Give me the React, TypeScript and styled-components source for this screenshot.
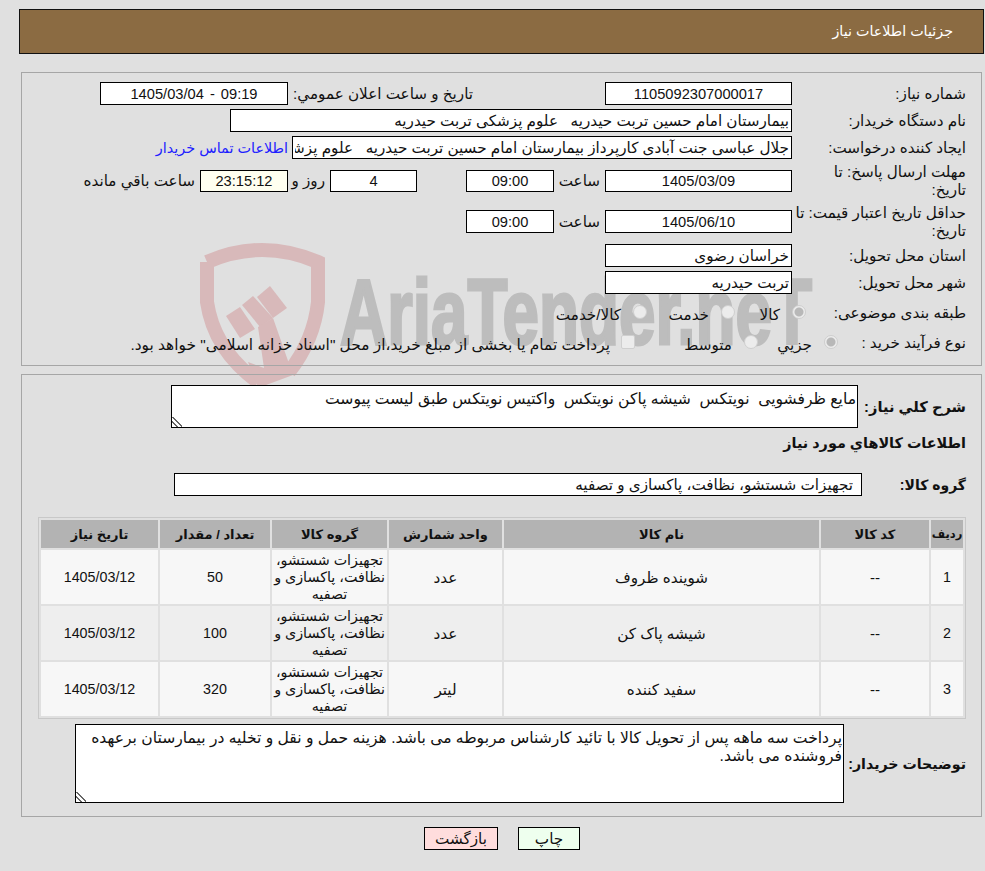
import styled, {createGlobalStyle} from 'styled-components';

const items = [
  {row: 1, name: 'شوینده ظروف', unit: 'عدد', qty: 50},
  {row: 2, name: 'شیشه پاک کن', unit: 'عدد', qty: 100},
  {row: 3, name: 'سفید کننده', unit: 'لیتر', qty: 320},
];

const GROUP = 'تجهیزات شستشو، نظافت، پاکسازی و تصفیه';
const FONT = `'Liberation Sans', 'DejaVu Sans', sans-serif`;

const GlobalStyle = createGlobalStyle`
  html, body {
    margin: 0;
    background: #e0e0e0;
    overflow: hidden;
  }
`;

export default function App() {
  return (
    <>
      <GlobalStyle />
      <Page>
        <Watermark viewBox="0 0 640 160" aria-hidden="true">
          <g fill="none" stroke="#d8b9ba" strokeWidth="14">
            <path d="M207 22 Q262 -2 318 22 L318 62 Q314 100 289 132" />
            <path d="M207 22 L207 62 Q214 110 258 142" />
          </g>
          <g fill="#d8b9ba">
            <path d="M226 76 L240 67 L255 89 L240 98 Z" />
            <path d="M242 65 L253 56 L273 78 L260 87 Z" />
            <path d="M257 57 L270 46 L287 68 L273 78 Z" />
            <path d="M258 87 L273 78 L293 135 L258 148 L248 122 L264 128 Z" />
          </g>
          <WatermarkText x="340" y="104" textLength="472" lengthAdjust="spacingAndGlyphs">
            AriaTender.neT
          </WatermarkText>
        </Watermark>

        <Header>جزئیات اطلاعات نیاز</Header>

        <InfoPanel>
          <Row>
            <Label>شماره نیاز:</Label>
            <Field $width={187} readOnly value="1105092307000017" />
            <InlineLabel $width={317} $inset={132}>تاریخ و ساعت اعلان عمومي:</InlineLabel>
            <Field $width={188} readOnly value="09:19 - 1405/03/04" />
          </Row>
          <Row>
            <Label>نام دستگاه خریدار:</Label>
            <TextField $width={562} readOnly value="بیمارستان امام حسین تربت حیدریه   علوم پزشکی تربت حیدریه" />
          </Row>
          <Row>
            <Label>ایجاد کننده درخواست:</Label>
            <TextField
              $width={500}
              readOnly
              value="جلال عباسی جنت آبادی کارپرداز بیمارستان امام حسین تربت حیدریه   علوم پزشکی تربت حیدریه"
            />
            <ContactLink href="#">اطلاعات تماس خریدار</ContactLink>
          </Row>
          <TallRow $height={40} $lift={-2}>
            <Label>مهلت ارسال پاسخ: تا<br />تاریخ:</Label>
            <Field $width={187} $height={22} readOnly value="1405/03/09" />
            <InlineLabel $width={51} $inset={5}>ساعت</InlineLabel>
            <Field $width={88} $height={22} readOnly value="09:00" />
            <Field $width={87} $height={22} $gap={49} readOnly value="4" />
            <InlineLabel $width={42} $inset={5}>روز و</InlineLabel>
            <Field $width={88} $height={22} $tint="#fffff0" readOnly value="23:15:12" />
            <InlineLabel $inset={5}>ساعت باقي مانده</InlineLabel>
          </TallRow>
          <TallRow $height={41} $lift={0}>
            <Label>حداقل تاریخ اعتبار قیمت: تا<br />تاریخ:</Label>
            <Field $width={187} readOnly value="1405/06/10" />
            <InlineLabel $width={51} $inset={5}>ساعت</InlineLabel>
            <Field $width={88} readOnly value="09:00" />
          </TallRow>
          <Row>
            <Label>استان محل تحویل:</Label>
            <TextField $width={187} readOnly value="خراسان رضوی" />
          </Row>
          <Row>
            <Label>شهر محل تحویل:</Label>
            <TextField $width={187} readOnly value="تربت حیدریه" />
          </Row>
          <ChoiceRow>
            <Label>طبقه بندی موضوعی:</Label>
            <Choices $offset={-14}>
              <Radio $width={71} $checked>کالا</Radio>
              <Radio $width={88}>خدمت</Radio>
              <Radio $width={92}>کالا/خدمت</Radio>
            </Choices>
          </ChoiceRow>
          <ChoiceRow>
            <Label>نوع فرآیند خرید :</Label>
            <Choices $offset={-46}>
              <Radio $width={80} $checked>جزيي</Radio>
              <Radio $width={123}>متوسط</Radio>
              <CheckNote>
                <FadedBox />
                پرداخت تمام یا بخشی از مبلغ خرید،از محل "اسناد خزانه اسلامی" خواهد بود.
              </CheckNote>
            </Choices>
          </ChoiceRow>
        </InfoPanel>

        <DetailPanel>
          <BoxRow>
            <StrongLabel $width={108}>شرح کلي نياز:</StrongLabel>
            <DescriptionBox
              readOnly
              value="مایع ظرفشویی  نویتکس  شیشه پاکن نویتکس  واکتیس نویتکس طبق لیست پیوست"
            />
          </BoxRow>
          <SectionTitle>اطلاعات کالاهاي مورد نياز</SectionTitle>
          <GroupRow>
            <GroupLabel $width={104}>گروه کالا:</GroupLabel>
            <GroupField readOnly value={GROUP} />
          </GroupRow>
          <ItemsTable>
            <colgroup>
              <col width="32" />
              <col width="108" />
              <col width="315" />
              <col width="113" />
              <col width="115" />
              <col width="110" />
              <col width="117" />
            </colgroup>
            <thead>
              <tr>
                <th>ردیف</th>
                <th>کد کالا</th>
                <th>نام کالا</th>
                <th>واحد شمارش</th>
                <th>گروه کالا</th>
                <th>تعداد / مقدار</th>
                <th>تاریخ نیاز</th>
              </tr>
            </thead>
            <tbody>
              {items.map((item) => (
                <tr key={item.row}>
                  <td>{item.row}</td>
                  <td>--</td>
                  <td>{item.name}</td>
                  <td>{item.unit}</td>
                  <td>{GROUP}</td>
                  <td>{item.qty}</td>
                  <td>1405/03/12</td>
                </tr>
              ))}
            </tbody>
          </ItemsTable>
          <NotesRow>
            <NotesLabel $width={122}>توضیحات خریدار:</NotesLabel>
            <NotesBox
              readOnly
              value="پرداخت سه ماهه پس از تحویل کالا با تائید کارشناس مربوطه می باشد. هزینه حمل و نقل و تخلیه در بیمارستان برعهده فروشنده می باشد."
            />
          </NotesRow>
        </DetailPanel>

        <Actions>
          <ActionButton $tint="#eeffee" $width={62}>چاپ</ActionButton>
          <ActionButton $tint="#ffdddd" $width={74}>بازگشت</ActionButton>
        </Actions>
      </Page>
    </>
  );
}

const Page = styled.div`
  position: relative;
  width: 985px;
  height: 871px;
  box-sizing: border-box;
  padding: 9px 1px 0 0;
  direction: rtl;
  font-family: ${FONT};
  font-size: 15.2px;
  color: #111;
  overflow: hidden;
`;

const Watermark = styled.svg`
  position: absolute;
  left: 0;
  top: 240px;
  width: 640px;
  height: 160px;
  overflow: visible;
`;

const WatermarkText = styled.text`
  font-family: 'Liberation Sans', sans-serif;
  font-weight: 700;
  font-size: 92px;
  fill: #bdbdbd;
  stroke: #bdbdbd;
  stroke-width: 3px;
  direction: ltr;
`;

const Header = styled.div`
  position: relative;
  box-sizing: border-box;
  width: 965px;
  height: 45px;
  padding: 13px 30px 0 0;
  background: #8b6b42;
  border: 1px solid #111;
  color: #fff;
  font-size: 14.3px;
`;

const InfoPanel = styled.div`
  position: relative;
  box-sizing: border-box;
  width: 961px;
  height: 294px;
  margin: 18px 2px 0 0;
  padding: 9px 0 0 0;
  border: 1px solid #a6a6a6;
  display: flex;
  flex-direction: column;
`;

const Row = styled.div`
  display: flex;
  align-items: center;
  height: 23px;
  margin-bottom: 4px;
`;

const TallRow = styled(Row)<{$height: number; $lift: number}>`
  height: ${(p) => p.$height}px;
  margin-top: ${(p) => p.$lift}px;
  margin-bottom: ${(p) => (p.$lift === 0 ? 2 : 0)}px;
`;

const ChoiceRow = styled.div`
  display: flex;
  align-items: center;
  height: 30px;
`;

const Label = styled.div`
  box-sizing: border-box;
  width: 189px;
  padding: 0 15px 0 0;
  line-height: 18px;
  flex: none;
  white-space: nowrap;
`;

const InlineLabel = styled.div<{$width?: number; $inset: number}>`
  box-sizing: border-box;
  flex: none;
  width: ${(p) => (p.$width ? `${p.$width}px` : 'auto')};
  padding-right: ${(p) => p.$inset}px;
  white-space: nowrap;
`;

const Field = styled.input<{$width: number; $height?: number; $gap?: number; $tint?: string}>`
  box-sizing: border-box;
  flex: none;
  width: ${(p) => p.$width}px;
  height: ${(p) => p.$height ?? 23}px;
  margin: 0 ${(p) => p.$gap ?? 0}px 0 0;
  padding: 0 8px;
  border: 1px solid #000;
  background: ${(p) => p.$tint ?? '#fff'};
  color: #111;
  font: inherit;
  font-size: 14.67px;
  word-spacing: 2px;
  text-align: center;
  direction: rtl;
  outline: none;
`;

const TextField = styled(Field)`
  padding: 0 2px;
  font-size: 15.2px;
  word-spacing: 0;
  text-align: right;
`;

const ContactLink = styled.a`
  margin-right: 4px;
  color: #2020ff;
  font-size: 14.4px;
  text-decoration: none;
  white-space: nowrap;
`;

const Choices = styled.div<{$offset: number}>`
  display: flex;
  align-items: center;
  margin-right: ${(p) => p.$offset}px;
`;

const Radio = styled.div<{$width: number; $checked?: boolean}>`
  display: flex;
  align-items: center;
  gap: 12px;
  width: ${(p) => p.$width}px;
  padding-top: 3px;
  flex: none;
  white-space: nowrap;
  &::before {
    content: '';
    box-sizing: border-box;
    flex: none;
    width: 14px;
    height: 14px;
    margin-top: -6px;
    border-radius: 50%;
    border: 1px solid #cfcfcf;
    background: ${(p) => (p.$checked ? 'radial-gradient(circle, #b8b8b8 0 4px, #ececec 5px)' : '#ececec')};
  }
`;

const CheckNote = styled.div`
  display: flex;
  align-items: center;
  gap: 11px;
  padding-top: 3px;
  font-size: 15.4px;
  white-space: nowrap;
`;

const FadedBox = styled.span`
  box-sizing: border-box;
  width: 14px;
  height: 14px;
  margin-top: -6px;
  border: 1px solid #cfcfcf;
  border-radius: 2px;
  background: #ececec;
`;

const DetailPanel = styled.div`
  position: relative;
  box-sizing: border-box;
  width: 961px;
  height: 443px;
  margin: 8px 2px 0 0;
  padding: 10px 15px 0 0;
  border: 1px solid #a6a6a6;
`;

const BoxRow = styled.div`
  display: flex;
  align-items: center;
`;

const StrongLabel = styled.div<{$width: number}>`
  flex: none;
  width: ${(p) => p.$width}px;
  font-size: 14.67px;
  font-weight: 700;
  white-space: nowrap;
`;

const DescriptionBox = styled.textarea`
  box-sizing: border-box;
  display: block;
  width: 687px;
  height: 43px;
  margin: 0;
  padding: 4px 1px 2px;
  border: 1px solid #000;
  background: #fff;
  color: #111;
  font: inherit;
  font-size: 15.6px;
  line-height: 18px;
  direction: rtl;
  outline: none;
  resize: both;

  &::-webkit-resizer {
    background: linear-gradient(
        45deg,
        transparent 22%,
        #666 22% 32%,
        transparent 32% 46%,
        #666 46% 56%,
        transparent 56%
      )
      left bottom / 10px 10px no-repeat;
  }
`;

const SectionTitle = styled.div`
  margin-top: 6px;
  height: 20px;
  font-size: 14.4px;
  font-weight: 700;
  line-height: 18px;
`;

const GroupRow = styled.div`
  display: flex;
  align-items: center;
  height: 23px;
  margin-top: 19px;
`;

const GroupLabel = styled(StrongLabel)`
  font-size: 14px;
`;

const GroupField = styled.input`
  box-sizing: border-box;
  width: 688px;
  height: 23px;
  margin: 0;
  padding: 0 8px;
  border: 1px solid #000;
  background: #fff;
  color: #111;
  font: inherit;
  direction: rtl;
  outline: none;
`;

const ItemsTable = styled.table`
  box-sizing: border-box;
  width: 927px;
  height: 201px;
  margin-top: 21px;
  table-layout: fixed;
  border-collapse: separate;
  border-spacing: 2px;
  border: 1px solid #c8c8c8;

  th {
    height: 28px;
    padding: 0;
    background: #b3b3b3;
    font-size: 13px;
    font-weight: 700;
  }

  th:first-child {
    font-size: 11.5px;
  }

  td {
    box-sizing: border-box;
    height: 54px;
    padding: 1px 0 0;
    text-align: center;
    line-height: 17.3px;
  }

  td:nth-child(1),
  td:nth-child(5),
  td:nth-child(6),
  td:nth-child(7) {
    font-size: 14.3px;
  }

  tbody tr:nth-child(odd) td {
    background: #f7f7f7;
  }

  tbody tr:nth-child(even) td {
    background: #eeeeee;
  }
`;

const NotesRow = styled(BoxRow)`
  margin-top: 5px;
`;

const NotesLabel = styled(StrongLabel)`
  font-size: 14.2px;
`;

const NotesBox = styled(DescriptionBox)`
  width: 769px;
  height: 79px;
`;

const Actions = styled.div`
  position: relative;
  display: flex;
  justify-content: center;
  gap: 20px;
  margin-top: 10px;
  padding-left: 20px;
`;

const ActionButton = styled.button<{$tint: string; $width: number}>`
  box-sizing: border-box;
  width: ${(p) => p.$width}px;
  height: 23px;
  padding: 0;
  border: 1px solid #000;
  background: ${(p) => p.$tint};
  color: #111;
  font: inherit;
`;
